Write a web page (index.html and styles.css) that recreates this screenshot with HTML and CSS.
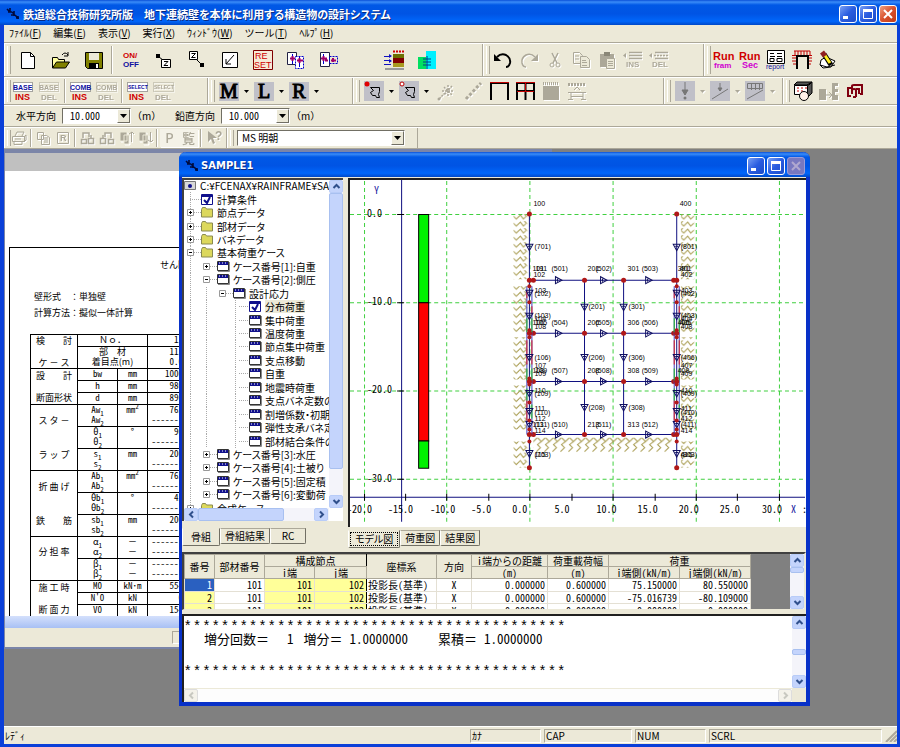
FILE: index.html
```
<!doctype html>
<html lang="ja">
<head>
    <meta charset="utf-8">
    <title>地下連続壁を本体に利用する構造物の設計システム</title>
    <link rel="stylesheet" href="styles.css">
</head>
<body>

<!-- 共通シンボル -->
<svg class="defs" width="0" height="0">
    <defs>
        <symbol id="i-app" viewBox="0 0 14 14"><path d="M1 2l2 2M4 1v4M2 5h4M6 5l2 2M8 4v5M5 8h4M9 8l3 3M10 11h3M12 9v3" stroke="#000a3c" stroke-width="1.6" fill="none"/></symbol>
        <symbol id="i-win" viewBox="0 0 13 11"><path d="M.5.5h11v9H.5z" fill="#fff" stroke="#333"/><path d="M1 1h10v3H1z" fill="#10108c"/><path d="M2 2h1M5 2h1M8 2h1" stroke="#fff"/><path d="M12.500 1v9.500H1" stroke="#888" fill="none"/></symbol>
        <symbol id="i-chk" viewBox="0 0 13 11"><path d="M.5.5h11v10H.5z" fill="#fff" stroke="#10108c"/><path d="M1 1h10v2H1z" fill="#10108c"/><path d="M3 6l3 3 3-6" stroke="#10108c" stroke-width="2" fill="none"/></symbol>
        <symbol id="i-fold" viewBox="0 0 13 11"><path d="M.5 2.500l1-2h3l1 1.500h6v8H.5z" fill="#dcd85c" stroke="#8a8a50"/></symbol>
        <symbol id="i-root" viewBox="0 0 13 11"><path d="M.5 1.500h11v8H.5z" fill="#d8d8d8" stroke="#777"/><circle cx="6" cy="6" r="2" fill="#10108c"/></symbol>
        <symbol id="i-plus" viewBox="0 0 7 7"><path d="M.5.5h6v6h-6z" fill="#fff" stroke="#999"/><path d="M2 3.500h3M3.500 2v3" stroke="#000"/></symbol>
        <symbol id="i-minus" viewBox="0 0 7 7"><path d="M.5.5h6v6h-6z" fill="#fff" stroke="#999"/><path d="M2 3.500h3" stroke="#000"/></symbol>
        <symbol id="i-down" viewBox="0 0 7 4"><path d="M0 0h7L3.500 4z"/></symbol>
        <symbol id="i-ar" viewBox="0 0 9 9"><path d="M1.500 6l3-3 3 3" fill="none" stroke="currentColor" stroke-width="2"/></symbol>
        <symbol id="i-min" viewBox="0 0 12 12"><path d="M1 8h5v3H1z" fill="#fff"/></symbol>
        <symbol id="i-max" viewBox="0 0 12 12"><path d="M1.500 2.500h9v8h-9z" fill="none" stroke="#fff"/><path d="M1 1h10v3H1z" fill="#fff"/></symbol>
        <symbol id="i-close" viewBox="0 0 12 12"><path d="M2 2l8 8M10 2l-8 8" stroke="currentColor" stroke-width="2"/></symbol>
        <symbol id="i-ins" viewBox="0 0 20 20"><path d="M6 2.500h13M6 5.500h13M6 8.500h13" stroke="currentColor" stroke-width="1.500"/><path d="M3 3v5L0 5.500z" fill="currentColor"/></symbol>
        <symbol id="i-del" viewBox="0 0 20 20"><path d="M6 2.500h13M6 8.500h13" stroke="currentColor" stroke-width="1.500"/><path d="M5 5.500h14" stroke="currentColor" stroke-width="1.500" stroke-dasharray="2 1"/><path d="M3 3v5L0 5.500z" fill="currentColor"/></symbol>
        <symbol id="i-hand" viewBox="0 0 20 20"><path d="M0 0h20v20H0z" fill="#c0c0c8"/><path d="M6.500 6.500h9M6.500 6.500l3 3-3 2 2 3h3l1 2h3l-1-3 1-3v-4" fill="none" stroke="#000"/></symbol>
    </defs>
</svg>

<div class="app">
    <header class="title">
        <svg class="ico14"><use href="#i-app"/></svg>
        <h1>鉄道総合技術研究所版　地下連続壁を本体に利用する構造物の設計システム</h1>
        <button class="cap" aria-label="最小化"><svg><use href="#i-min"/></svg></button>
        <button class="cap" aria-label="最大化"><svg><use href="#i-max"/></svg></button>
        <button class="cap red" aria-label="閉じる"><svg><use href="#i-close"/></svg></button>
    </header>

    <nav class="menu">
        <a href="#">ﾌｧｲﾙ(<u>F</u>)</a>
        <a href="#">編集(<u>E</u>)</a>
        <a href="#">表示(<u>V</u>)</a>
        <a href="#">実行(<u>X</u>)</a>
        <a href="#">ｳｨﾝﾄﾞｳ(<u>W</u>)</a>
        <a href="#">ツール(<u>T</u>)</a>
        <a href="#">ﾍﾙﾌﾟ(<u>H</u>)</a>
    </nav>

    <!-- ツールバー1 -->
    <div class="bar bar1">
        <div class="band band-file">
            <button class="tb wide"><svg viewBox="0 0 20 20"><path d="M3.500 2.500h9l4 4v12h-13z" fill="#fff" stroke="#000"/><path d="M12.500 2.500v4h4" fill="none" stroke="#000"/></svg></button>
            <button class="tb wide"><svg viewBox="0 0 20 20"><path d="M1.500 18V7.500h5l1 2h6V12" fill="#ffffa0" stroke="#000"/><path d="M1.500 18l4-6h13l-4 6z" fill="#808000" stroke="#000"/><path d="M11 5q3-4 6 0M17 2v4h-4" fill="none" stroke="#000"/></svg></button>
            <button class="tb wide"><svg viewBox="0 0 20 20"><path d="M1.500 2.500h17v16h-15l-2-2z" fill="#808000" stroke="#000"/><path d="M5 3h10v7H5z" fill="#ece9d8"/><path d="M5 13h10v5H5z" fill="#000"/><path d="M12 14h2v4h-2z" fill="#fff"/></svg></button>
            <i class="sep"></i>
            <button class="tb wide"><svg viewBox="0 0 20 20"><text x="2" y="8" class="t8" fill="#d00000">ON/</text><text x="2" y="17" class="t8" fill="#1010a0">OFF</text></svg></button>
            <button class="tb wide"><svg viewBox="0 0 20 20"><path d="M2 4h4v4H2z"/><path d="M5 7l4 3" stroke="#000"/><path d="M7.500 9.500h9v8h-9z" fill="#fff" stroke="#000"/><path d="M10 11.500h4l-4 4h4" fill="none" stroke="#000"/></svg></button>
            <button class="tb wide"><svg viewBox="0 0 20 20"><path d="M2.500 1.500h8v8h-8z" fill="#fff" stroke="#000"/><path d="M4.500 3.500h4l-4 4h4M10 10l4 4" fill="none" stroke="#000"/><path d="M13 13h4v4h-4z"/></svg></button>
            <button class="tb wide"><svg viewBox="0 0 20 20"><path d="M2.500 2.500h15v15h-15z" fill="#fff" stroke="#000"/><path d="M14 5l-8 9M6 9v5h5" fill="none" stroke="#000"/></svg></button>
            <button class="tb wide"><svg viewBox="0 0 20 20"><path d="M.5.5h19v19H.5z" fill="#f6ead8" stroke="#800000"/><text x="2" y="9" class="t9 n" fill="#d00000">RE</text><text x="1" y="18" class="t9 n" fill="#d00000">SET</text></svg></button>
            <button class="tb wide"><svg viewBox="0 0 20 20"><path d="M1.500 2.500h9v12h-9z" fill="#fff" stroke="#224"/><path d="M9.500 6.500h8v12h-8z" fill="#fff" stroke="#00c" stroke-dasharray="2 1"/><path d="M6.500 4v10M13.500 7v10" stroke="#00c"/><path d="M4 8.500h5M11 10.500h6M6.500 6v5M13.500 8v5" stroke="#a0006a" stroke-width="2" fill="none"/></svg></button>
            <button class="tb wide"><svg viewBox="0 0 20 20"><path d="M1.500 2.500h9v14h-9z" fill="#fff" stroke="#224"/><path d="M10.500 6.500h8v7h-8z" fill="none" stroke="#00c" stroke-dasharray="2 1"/><path d="M4.500 4v10" stroke="#00c"/><path d="M2 8.500h6M6 10.500h3M12 10.500h5M14 8v4M4.500 6v5" stroke="#a0006a" stroke-width="2"/></svg></button>
            <i class="gap"></i>
            <button class="tb wide"><svg viewBox="0 0 20 20"><path d="M0 6.500h7M0 10.500h7M0 14.500h7" stroke="#1010c0"/><path d="M5 4l3 2-3 2M5 9l3 2-3 2" fill="#1010c0"/><path d="M9 1.500h11" stroke="#d00000" stroke-width="2" stroke-dasharray="2 1"/><path d="M9 4h11v4H9z" fill="#6c7000"/><path d="M9 8h11v5H9z" fill="#800000"/><path d="M9 13h11v4H9z" fill="#a89a20"/><path d="M1 18h19v2H1z" fill="#999"/></svg></button>
            <button class="tb wide"><svg viewBox="0 0 20 20"><path d="M1 7h8v12H1z" fill="#00e060"/><path d="M9 1h10v18H9z" fill="#00f0ff"/><path d="M6 9h8M6 12h8M6 15h8M10 6v13" stroke="#004080"/></svg></button>
        </div>
        <div class="band band-edit">
            <button class="tb"><svg viewBox="0 0 20 20"><path d="M4 7q4-4 9-2 5 3 4 8-1 4-4 4" fill="none" stroke="#000" stroke-width="2"/><path d="M1 4v7h7z"/></svg></button>
            <button class="tb off"><svg viewBox="0 0 20 20"><path d="M16 7q-4-4-9-2-5 3-4 8 1 4 4 4" fill="none" stroke="currentColor" stroke-width="1.500"/><path d="M19 4v7h-7z" fill="currentColor"/></svg></button>
            <button class="tb off"><svg viewBox="0 0 20 20"><path d="M7 3l5 10M13 3L8 13" stroke="currentColor" stroke-width="1.500"/><circle cx="7" cy="15" r="2" fill="none" stroke="currentColor"/><circle cx="13" cy="15" r="2" fill="none" stroke="currentColor"/></svg></button>
            <button class="tb off"><svg viewBox="0 0 20 20"><path d="M2.500 2.500h6l3 3v8h-9zM4 6h4M4 9h4" fill="none" stroke="currentColor"/><path d="M9.500 6.500h6l3 3v8h-9z" fill="#ece9d8" stroke="currentColor"/><path d="M11 10.500h4M11 12.500h5M11 15.500h5" stroke="currentColor"/></svg></button>
            <button class="tb off"><svg viewBox="0 0 20 20"><path d="M3 4h14v13H3z" fill="currentColor"/><path d="M7 2h6v4H7z" fill="#8a8778"/><path d="M9.500 8.500h8v10h-8z" fill="#ece9d8" stroke="currentColor"/><path d="M11 11.500h5M11 13.500h5M11 15.500h5" stroke="currentColor"/></svg></button>
            <button class="tb off"><svg viewBox="0 0 20 20"><use href="#i-ins"/><text x="3" y="17" class="t8">INS</text></svg></button>
            <button class="tb off"><svg viewBox="0 0 20 20"><use href="#i-del"/><text x="3" y="17" class="t8">DEL</text></svg></button>
        </div>
        <div class="band last">
            <button class="tb"><svg class="over" viewBox="0 0 20 20"><text x="-1" y="10" class="t11" fill="#d00000">Run</text><text x="0" y="18" class="t8" fill="#d000d0">fram</text></svg></button>
            <button class="tb"><svg class="over" viewBox="0 0 20 20"><text x="-1" y="10" class="t11" fill="#d00000">Run</text><text x="2" y="18" class="t9" fill="#d000d0">Sec</text></svg></button>
            <button class="tb"><svg class="over" viewBox="0 0 20 20"><path d="M1.500.5h17v13h-17z" fill="#fff" stroke="#000"/><path d="M4 3.500h4M11 3.500h5M4 6.500h5M11 6.500h5" stroke="#000"/><path d="M4 8.500h4v3H4zM11 8.500h5v3h-5z" fill="none" stroke="#000"/><text x="0" y="19" class="t7 n" fill="#1010a0">report</text></svg></button>
            <button class="tb"><svg viewBox="0 0 20 20"><path d="M0 5.500h20M3 1v4M6 1v4M9 1v4M12 1v4M15 1v4M18 1v4M2 1h16M0 8h4M0 11h4M1 14h3M16 8h4M16 11h4M16 14h3" stroke="#c00000"/><path d="M5 19V6h11v13" fill="none" stroke="#000" stroke-width="2"/></svg></button>
            <button class="tb"><svg viewBox="0 0 20 20"><path d="M3 10l5-3 9 4-4 6-8 1-3-3z" fill="#fff" stroke="#000"/><path d="M2 15l7 2 8-2" fill="none" stroke="#000"/><path d="M6 4l7 11" stroke="#000" stroke-width="5"/><path d="M6 4l6 9" stroke="#ffee20" stroke-width="3"/><path d="M4 2l3 4" stroke="#902020" stroke-width="5"/></svg></button>
        </div>
    </div>

    <!-- ツールバー2 -->
    <div class="bar bar2">
        <div class="band band-case">
            <button class="tb"><svg class="over" viewBox="0 0 20 20"><path d="M.5 1.500h19v9H.5z" fill="#fff" stroke="#555" stroke-dasharray="1 1"/><text x="0" y="9" class="t7" fill="#1010a0">BASE</text><text x="2" y="19" class="t9" fill="#d00000">INS</text></svg></button>
            <button class="tb off"><svg class="over" viewBox="0 0 20 20"><path d="M.5 1.500h19v9H.5z" fill="none" stroke="currentColor" stroke-dasharray="1 1"/><text x="0" y="9" class="t7">BASE</text><text x="2" y="19" class="t8">DEL</text></svg></button>
            <i class="sep"></i>
            <button class="tb"><svg class="over" viewBox="0 0 20 20"><path d="M.5 1.500h20v9H.5z" fill="#fff" stroke="#555" stroke-dasharray="1 1"/><text x="0" y="9" class="t7" fill="#1010a0">COMB</text><text x="2" y="19" class="t9" fill="#d00000">INS</text></svg></button>
            <button class="tb off"><svg class="over" viewBox="0 0 20 20"><path d="M.5 1.500h20v9H.5z" fill="none" stroke="currentColor" stroke-dasharray="1 1"/><text x="0" y="9" class="t7">COMB</text><text x="2" y="19" class="t8">DEL</text></svg></button>
            <i class="sep"></i>
            <button class="tb"><svg class="over" viewBox="0 0 20 20"><path d="M.5 1.500h20v9H.5z" fill="#fff" stroke="#555" stroke-dasharray="1 1"/><text x="1" y="8" class="t6" fill="#1010a0">SELECT</text><text x="2" y="19" class="t9" fill="#d00000">INS</text></svg></button>
            <button class="tb off"><svg class="over" viewBox="0 0 20 20"><path d="M.5 1.500h20v9H.5z" fill="none" stroke="currentColor" stroke-dasharray="1 1"/><text x="1" y="8" class="t6">SELECT</text><text x="2" y="19" class="t8">DEL</text></svg></button>
        </div>
        <div class="band band-mlr">
            <button class="tb serif">M</button><button class="dd"><svg><use href="#i-down"/></svg></button>
            <button class="tb serif">L</button><button class="dd"><svg><use href="#i-down"/></svg></button>
            <button class="tb serif">R</button><button class="dd"><svg><use href="#i-down"/></svg></button>
        </div>
        <div class="band band-sel">
            <button class="tb s20"><svg viewBox="0 0 20 20"><use href="#i-hand"/><circle cx="3" cy="3" r="2.500" fill="#e00000"/></svg></button><button class="dd"><svg><use href="#i-down"/></svg></button>
            <button class="tb s20"><svg viewBox="0 0 20 20"><use href="#i-hand"/><circle cx="3" cy="3" r="2" fill="#fff" stroke="#c00000"/></svg></button><button class="dd"><svg><use href="#i-down"/></svg></button>
            <button class="tb off"><svg viewBox="0 0 20 20"><path d="M11 4v12M5 10h12M7 6l8 8M15 5l-8 9M8 12l-6 6" stroke="currentColor" stroke-width="1.500" stroke-dasharray="2 1"/><circle cx="2" cy="18" r="1.500" fill="currentColor"/></svg></button>
            <button class="tb off"><svg viewBox="0 0 20 20"><path d="M3 18L18 2" stroke="currentColor" stroke-width="3" stroke-dasharray="3 2"/></svg></button>
            <button class="tb"><svg viewBox="0 0 20 20"><path d="M2 19V2h17v17" fill="none" stroke="#000" stroke-width="2"/><path d="M1 1.500h19" stroke="#c00000"/></svg></button>
            <button class="tb"><svg viewBox="0 0 20 20"><path d="M2 19V2h17v17M10.500 2v17M2 10h17" fill="none" stroke="#000" stroke-width="2"/><path d="M1 1.500h19M2 10.500h17M10.500 1v10" stroke="#c00000"/></svg></button>
            <button class="tb off"><svg viewBox="0 0 20 20"><path d="M2 5h16v14H2z" fill="currentColor"/><path d="M2 2.500h16" stroke="currentColor" stroke-width="3" stroke-dasharray="1 1"/></svg></button>
            <button class="tb off"><svg viewBox="0 0 20 20"><path d="M1 3.500h18" stroke="currentColor" stroke-width="3" stroke-dasharray="2 1"/><path d="M7 9l3-3 3 3M1 11.500h18M4 11v8M16 11v8M4 15.500h12M1 18.500h5M14 18.500h5" fill="none" stroke="currentColor"/></svg></button>
        </div>
        <div class="band band-load">
            <button class="tb s20 off box"><svg viewBox="0 0 20 20"><path d="M10 1v13M7 9l3 5 3-5z" fill="#777" stroke="#777"/><circle cx="10" cy="17" r="1.500" fill="#777"/></svg></button><button class="dd off"><svg><use href="#i-down"/></svg></button>
            <button class="tb s20 off box"><svg viewBox="0 0 20 20"><path d="M10 2v8M8 7l2 3 2-3zM2 18L18 8" fill="#777" stroke="#777"/></svg></button><button class="dd off"><svg><use href="#i-down"/></svg></button>
            <button class="tb s20 off box"><svg viewBox="0 0 20 20"><path d="M2.500 2.500h15v5h-15zM6.500 2v7M10.500 2v7M14.500 2v7M2 18L18 9" fill="none" stroke="#777"/></svg></button><button class="dd off"><svg><use href="#i-down"/></svg></button>
        </div>
        <div class="band last">
            <button class="tb"><svg viewBox="0 0 20 20"><path d="M1 4l3-3h15l-3 3zM14 4l5-3v11l-5 5z" fill="#555" stroke="#000"/><path d="M1.500 4.500h13v9h-13z" fill="#fff" stroke="#000"/><path d="M4 7h2M8 7h2M12 7h2M4 10h2M8 10h2" stroke="#c00000"/><circle cx="11" cy="15" r="4.500" fill="#fff0e8" stroke="#000"/></svg></button>
            <button class="tb off"><svg viewBox="0 0 20 20"><path d="M0 8h7v11H0zM13 2h6v3h-3v3h3v3h-3v3h3v5h-6z" fill="currentColor"/><path d="M7 14h6M10 11l3 3-3 3" stroke="currentColor" fill="none"/></svg></button>
            <button class="tb"><svg viewBox="0 0 20 20"><path d="M6 15H3V7h4M7 13V5q0-1 2-1h8v9h-2M11 16V9q0-1-2-1-2 0-2 1M11 16H8M14 13V8h-3" fill="none" stroke="#800010" stroke-width="2"/></svg></button>
        </div>
    </div>

    <!-- 寸法入力 -->
    <div class="bar bar3">
        <label for="hx">水平方向</label>
        <div class="combo num"><select id="hx"><option>10.000</option></select><span class="combo-btn"><svg><use href="#i-down"/></svg></span></div>
        <span class="unit">（m）</span>
        <label for="vy">鉛直方向</label>
        <div class="combo num"><select id="vy"><option>10.000</option></select><span class="combo-btn"><svg><use href="#i-down"/></svg></span></div>
        <span class="unit">（m）</span>
    </div>

    <div class="bar bar4">
        <div class="band band-print">
            <button class="tb s off"><svg viewBox="0 0 16 16"><path d="M4 6l2-4h7l-2 4M1.500 6.500h12v5h-12zM3 11.500h8v3H3zM13 7l2-2v5l-2 2M4 9h6" fill="none" stroke="currentColor"/></svg></button>
            <i class="sep"></i>
            <button class="tb s off"><svg viewBox="0 0 16 16"><path d="M1.500 2.500h6v7h-6zM5.500 5.500h5l3 2v7h-8zM8 8h4M8 10h4M8 12h4" fill="none" stroke="currentColor"/></svg></button>
            <button class="tb s off"><svg viewBox="0 0 16 16"><path d="M2.500 2.500h11v11h-11z" fill="none" stroke="currentColor"/><text x="5" y="11" class="t9">R</text></svg></button>
            <i class="sep"></i>
            <button class="tb s off"><svg viewBox="0 0 16 16"><path d="M3 8V3h6v4M1.500 9.500h5v4h-5zM8.500 8.500h5v5h-5zM11 8V5" fill="none" stroke="currentColor" stroke-width="1.500"/></svg></button>
            <button class="tb s off"><svg viewBox="0 0 16 16"><path d="M12 8V3H6v4M9.500 9.500h5v4h-5zM1.500 8.500h5v5h-5zM4 8V5" fill="none" stroke="currentColor" stroke-width="1.500"/></svg></button>
            <button class="tb s off"><svg viewBox="0 0 16 16"><path d="M2 2h7v9H2zM6 5h5v9H6z" fill="currentColor" stroke="#ece9d8"/><path d="M13.500 2v10M11 4l3-2 2 2" fill="none" stroke="currentColor"/></svg></button>
            <button class="tb s off"><svg viewBox="0 0 16 16"><path d="M2 2h7v9H2zM6 5h5v9H6z" fill="currentColor" stroke="#ece9d8"/><path d="M13.500 2v10M11 10l3 2 2-2" fill="none" stroke="currentColor"/></svg></button>
            <i class="sep"></i>
            <button class="tb s off glyph lit">P</button>
            <button class="tb s off glyph lit">覧</button>
            <i class="sep"></i>
            <button class="tb s off"><svg viewBox="0 0 16 16"><path d="M2 1v11l3-3 2 5 2-1-2-5h4z" fill="currentColor"/><text x="9" y="10" class="t12">?</text></svg></button>
        </div>
        <div class="band band-font">
            <div class="combo font"><select aria-label="フォント"><option>MS 明朝</option></select><span class="combo-btn"><svg><use href="#i-down"/></svg></span></div>
        </div>
    </div>

    <main class="mdi">

        <!-- 帳票ウィンドウ -->
        <section class="report">
            <div class="report-cap"></div>
            <div class="paper">
                <div class="sheet">
                    <p class="head">せん断</p>
                    <p class="info">壁形式　：単独壁</p>
                    <p class="info">計算方法：擬似一体計算</p>
                    <table class="calc">
                        <colgroup><col class="c47"><col class="c40"><col class="c30"><col class="c36"></colgroup>
                        <tr class="s"><th rowspan="2"><div>検　　討</div><div>ケ － ス</div></th><td colspan="2" class="fw">Ｎｏ．</td><td class="v">11</td></tr>
                        <tr class="d"><td colspan="2" class="fw">部　材<br>着目点(m)</td><td class="v">111 <br>0.0</td></tr>
                        <tr class="s"><th rowspan="3"><div>設　　計</div><div>断面形状</div></th><td>bw</td><td>mm</td><td class="v">1000</td></tr>
                        <tr class="s"><td>h</td><td>mm</td><td class="v">980</td></tr>
                        <tr class="s"><td>d</td><td>mm</td><td class="v">890</td></tr>
                        <tr class="d"><th rowspan="3" class="tall"><div>ス タ －</div><div>ラ ッ プ</div></th><td>Aw<sub>1</sub><br>Aw<sub>2</sub></td><td>mm<sup>2</sup></td><td class="v">765<br>-------</td></tr>
                        <tr class="d"><td>θ<sub>1</sub><br>θ<sub>2</sub></td><td>°</td><td class="v">90<br>-------</td></tr>
                        <tr class="d"><td>s<sub>1</sub><br>s<sub>2</sub></td><td>mm</td><td class="v">200<br>-------</td></tr>
                        <tr class="d"><th rowspan="3" class="tall"><div>折 曲 げ</div><div>鉄　　筋</div></th><td>Ab<sub>1</sub><br>Ab<sub>2</sub></td><td>mm<sup>2</sup></td><td class="v">765<br>-------</td></tr>
                        <tr class="d"><td>θb<sub>1</sub><br>θb<sub>2</sub></td><td>°</td><td class="v">45<br>-------</td></tr>
                        <tr class="d"><td>sb<sub>1</sub><br>sb<sub>2</sub></td><td>mm</td><td class="v">200<br>-------</td></tr>
                        <tr class="d"><th rowspan="2" class="up"><div>分 担 率</div></th><td>α<sub>1</sub><br>α<sub>2</sub></td><td class="fw">－<br>－</td><td class="v">-------<br>-------</td></tr>
                        <tr class="d"><td>β<sub>1</sub><br>β<sub>2</sub></td><td class="fw">－<br>－</td><td class="v">-------<br>-------</td></tr>
                        <tr class="s"><th rowspan="3"><div>施 工 時</div><div>断 面 力</div></th><td>M0</td><td>kN･m</td><td class="v">554</td></tr>
                        <tr class="s"><td>N'0</td><td>kN</td><td class="v">0</td></tr>
                        <tr class="s"><td>V0</td><td>kN</td><td class="v">154</td></tr>
                    </table>
                </div>
            </div>
            <div class="report-scroll"></div>
            <div class="report-status"><span></span></div>
        </section>

        <!-- モデルウィンドウ -->
        <section class="child">
            <header class="title sub">
                <svg class="ico14"><use href="#i-app"/></svg>
                <h2>SAMPLE1</h2>
                <button class="cap" aria-label="最小化"><svg><use href="#i-min"/></svg></button>
                <button class="cap" aria-label="最大化"><svg><use href="#i-max"/></svg></button>
                <button class="cap dim" aria-label="閉じる" disabled><svg><use href="#i-close"/></svg></button>
            </header>
            <div class="work">
                <div class="top">
                    <div class="left">
                        <div class="treebox">
                            <ul class="tree">
                                <li class="l0"><svg><use href="#i-root"/></svg>C:¥FCENAX¥RAINFRAME¥SA</li>
                                <li class="l1"><b></b><svg><use href="#i-chk"/></svg>計算条件</li>
                                <li class="l1"><b><svg><use href="#i-plus"/></svg></b><svg><use href="#i-fold"/></svg>節点データ</li>
                                <li class="l1"><b><svg><use href="#i-plus"/></svg></b><svg><use href="#i-fold"/></svg>部材データ</li>
                                <li class="l1"><b><svg><use href="#i-plus"/></svg></b><svg><use href="#i-fold"/></svg>バネデータ</li>
                                <li class="l1"><b><svg><use href="#i-minus"/></svg></b><svg><use href="#i-fold"/></svg>基本荷重ケース</li>
                                <li class="l2"><b><svg><use href="#i-plus"/></svg></b><svg><use href="#i-win"/></svg>ケース番号[1]:自重</li>
                                <li class="l2"><b><svg><use href="#i-minus"/></svg></b><svg><use href="#i-win"/></svg>ケース番号[2]:側圧</li>
                                <li class="l3"><b><svg><use href="#i-minus"/></svg></b><svg><use href="#i-win"/></svg>設計応力</li>
                                <li class="l4"><b></b><svg><use href="#i-chk"/></svg><span class="on">分布荷重</span></li>
                                <li class="l4"><b></b><svg><use href="#i-win"/></svg>集中荷重</li>
                                <li class="l4"><b></b><svg><use href="#i-win"/></svg>温度荷重</li>
                                <li class="l4"><b></b><svg><use href="#i-win"/></svg>節点集中荷重</li>
                                <li class="l4"><b></b><svg><use href="#i-win"/></svg>支点移動</li>
                                <li class="l4"><b></b><svg><use href="#i-win"/></svg>自重</li>
                                <li class="l4"><b></b><svg><use href="#i-win"/></svg>地震時荷重</li>
                                <li class="l4"><b></b><svg><use href="#i-win"/></svg>支点バネ定数の</li>
                                <li class="l4"><b></b><svg><use href="#i-win"/></svg>割増係数・初期</li>
                                <li class="l4"><b></b><svg><use href="#i-win"/></svg>弾性支承バネ定</li>
                                <li class="l4"><b></b><svg><use href="#i-win"/></svg>部材結合条件の</li>
                                <li class="l2"><b><svg><use href="#i-plus"/></svg></b><svg><use href="#i-win"/></svg>ケース番号[3]:水圧</li>
                                <li class="l2"><b><svg><use href="#i-plus"/></svg></b><svg><use href="#i-win"/></svg>ケース番号[4]:土被り</li>
                                <li class="l2"><b><svg><use href="#i-plus"/></svg></b><svg><use href="#i-win"/></svg>ケース番号[5]:固定積</li>
                                <li class="l2"><b><svg><use href="#i-plus"/></svg></b><svg><use href="#i-win"/></svg>ケース番号[6]:変動荷</li>
                                <li class="l1"><b><svg><use href="#i-plus"/></svg></b><svg><use href="#i-fold"/></svg>合成ケース</li>
                            </ul>
                            <div class="vs"><button class="up"><svg><use href="#i-ar"/></svg></button><i class="thumb long"></i><button class="dn"><svg><use href="#i-ar"/></svg></button></div>
                            <div class="hs"><button class="lf"><svg><use href="#i-ar"/></svg></button><i class="thumb"></i><button class="rt"><svg><use href="#i-ar"/></svg></button></div>
                        </div>
                        <div class="tabs tree-tabs">
                            <button class="tab cur">骨組</button><button class="tab">骨組結果</button><button class="tab">RC</button>
                        </div>
                    </div>
                    <div class="right">
                        <div class="canvas">
                            <svg viewBox="350 180 455 348" preserveAspectRatio="xMinYMin slice">
                                <defs>
                                    <pattern id="sp" x="513" y="214" width="14" height="7" patternUnits="userSpaceOnUse"><path d="M0 2l3 3 4-4 3 4 3-3-2-2" fill="none" stroke="#a89c50"/></pattern>
                                    <pattern id="spr" x="680" y="214" width="14" height="7" patternUnits="userSpaceOnUse"><path d="M2 0L0 2l3 3 4-4 3 4 3-3" fill="none" stroke="#a89c50"/></pattern>
                                    <pattern id="spb" x="533" y="437" width="8" height="16" patternUnits="userSpaceOnUse"><path d="M0 4l4-4 4 4-4 3 3 3-4 4" fill="none" stroke="#a89c50"/></pattern>
                                    <path id="td" d="M-3.500-3h7L0 3.500zM-1.500-1h3" fill="none" stroke="#101060"/>
                                    <path id="tr" d="M-3-3.500v7L3.500 0zM-1-1.500v3" fill="none" stroke="#101060"/>
                                    <g id="nodes">
                                        <circle cy="214" r="2.500"/><circle cy="280" r="2.500"/><circle cy="286" r="2"/><circle cy="302" r="2"/><circle cy="330" r="2"/><circle cy="333" r="2.500"/><circle cy="337" r="2"/>
                                        <circle cy="378" r="2"/><circle cy="381" r="2.500"/><circle cy="384" r="2"/><circle cy="402" r="2"/><circle cy="420" r="2"/><circle cy="429" r="2"/><circle cy="434" r="2.500"/><circle cy="441" r="2"/><circle cy="467" r="2.500"/>
                                    </g>
                                    <g id="wall">
                                        <path d="M-2.500 286V434M2.500 286V434" stroke="#4040c0"/>
                                        <path d="M-2.500 290v8M2.500 306v8M-2.500 340v24M2.500 340v24M-2.500 400v20" stroke="#e02020"/>
                                        <path d="M-2.500 318v14M2.500 318v14M-2.500 368v12M2.500 368v12M-2.500 388v12M2.500 404v14" stroke="#20c020"/>
                                        <path d="M0 214V467" stroke="#101080"/>
                                        <use href="#td" y="247"/><use href="#td" y="293"/><use href="#td" y="316"/><use href="#td" y="357"/><use href="#td" y="393"/><use href="#td" y="411"/><use href="#td" y="424"/><use href="#td" y="453"/>
                                    </g>
                                    <g id="beam">
                                        <path d="M529 0H676" stroke="#101080"/>
                                        <use href="#tr" x="558"/><use href="#tr" x="603"/><use href="#tr" x="648"/>
                                        <g fill="#b01818"><circle cx="533" r="2.500"/><circle cx="584" r="2.500"/><circle cx="623" r="2.500"/><circle cx="673" r="2.500"/></g>
                                    </g>
                                </defs>
                                <path d="M350 214.500h453M350 302.500h453M350 390.500h453M350 478.500h453M364.500 181v340M446.500 181v340M529.500 181v340M612.500 181v340M695.500 181v340M778.500 181v340" stroke="#40d040" stroke-dasharray="4 3" fill="none"/>
                                <path d="M401.500 180v341M350 496.500h454" stroke="#101080"/>
                                <path d="M397 214.500h7M397 302.500h7M397 390.500h7M397 478.500h7M364.500 493v7M405.500 493v7M446.500 493v7M488.500 493v7M529.500 493v7M571.500 493v7M612.500 493v7M654.500 493v7M695.500 493v7M736.500 493v7M778.500 493v7" stroke="#000"/>
                                <g stroke="#000"><path d="M418.500 214.500h10v88h-10z" fill="#00f000"/><path d="M418.500 302.500h10v138h-10z" fill="#f00"/><path d="M418.500 440.500h10v27h-10z" fill="#00f000"/></g>
                                <path d="M513 214h14v65h-14zM513 286h14v46h-14zM513 337h14v42h-14zM513 385h14v44h-14zM513 441h14v26h-14z" fill="url(#sp)"/>
                                <path d="M680 214h14v65h-14zM680 286h14v46h-14zM680 337h14v42h-14zM680 385h14v44h-14zM680 441h14v26h-14z" fill="url(#spr)"/>
                                <path d="M533 437h138v15H533z" fill="url(#spb)"/>
                                <path d="M584 280v154M623 280v154" stroke="#101080"/>
                                <use href="#beam" y="280"/><use href="#beam" y="333"/><use href="#beam" y="381"/><use href="#beam" y="434"/>
                                <use href="#td" x="584" y="307"/><use href="#td" x="584" y="357"/><use href="#td" x="584" y="407"/>
                                <use href="#td" x="623" y="307"/><use href="#td" x="623" y="357"/><use href="#td" x="623" y="407"/>
                                <use href="#wall" x="529"/><use href="#wall" x="676"/>
                                <use href="#nodes" x="529" fill="#b01818"/><use href="#nodes" x="676" fill="#b01818"/>
                                <g class="lbl">
                                    <text x="533" y="206">100</text><text x="679" y="206">400</text>
                                    <text x="534" y="249">(701)</text><text x="680" y="249">(801)</text>
                                    <text x="532" y="271">101</text><text x="535" y="271">191</text><text x="533" y="277">102</text><text x="551" y="271">(501)</text><text x="587" y="271">201</text><text x="595" y="271">(502)</text><text x="627" y="271">301</text><text x="641" y="271">(503)</text><text x="677" y="271">391</text><text x="679" y="271">401</text><text x="680" y="277">402</text>
                                    <text x="534" y="293">103</text><text x="534" y="296">(102)</text><text x="680" y="293">403</text><text x="680" y="296">(402)</text>
                                    <text x="588" y="309">(201)</text><text x="628" y="309">(301)</text>
                                    <text x="534" y="318">(103)</text><text x="680" y="318">(403)</text><text x="534" y="321">104</text><text x="680" y="321">404</text>
                                    <text x="532" y="325">106</text><text x="535" y="325">105</text><text x="534" y="329">108</text><text x="551" y="325">(504)</text><text x="587" y="325">206</text><text x="595" y="325">(505)</text><text x="627" y="325">306</text><text x="641" y="325">(506)</text><text x="677" y="325">406</text><text x="679" y="325">405</text><text x="680" y="329">408</text>
                                    <text x="534" y="360">(106)</text><text x="588" y="360">(206)</text><text x="628" y="360">(306)</text><text x="680" y="360">(406)</text>
                                    <text x="534" y="368">107</text><text x="532" y="373">108</text><text x="535" y="373">109</text><text x="534" y="376">109</text><text x="551" y="373">(507)</text><text x="587" y="373">208</text><text x="595" y="373">(508)</text><text x="627" y="373">308</text><text x="641" y="373">(509)</text><text x="680" y="368">407</text><text x="677" y="373">408</text><text x="680" y="376">409</text>
                                    <text x="534" y="393">110</text><text x="534" y="396">(109)</text><text x="680" y="393">410</text><text x="680" y="396">(409)</text>
                                    <text x="534" y="411">111</text><text x="534" y="414">(110)</text><text x="588" y="410">(208)</text><text x="628" y="410">(308)</text><text x="680" y="411">411</text><text x="680" y="414">(410)</text>
                                    <text x="534" y="420">112</text><text x="532" y="426">113</text><text x="534" y="426">(111)</text><text x="534" y="432">114</text><text x="551" y="426">(510)</text><text x="587" y="426">213</text><text x="595" y="426">(511)</text><text x="627" y="426">313</text><text x="641" y="426">(512)</text><text x="680" y="420">412</text><text x="680" y="426">(411)</text><text x="680" y="432">414</text>
                                    <text x="534" y="456">115</text><text x="534" y="456">(703)</text><text x="680" y="456">415</text><text x="680" y="456">(803)</text>
                                </g>
                                <g class="axis">
                                    <text x="367" y="217">0.0</text><text x="367" y="305">-10.0</text><text x="367" y="393">-20.0</text><text x="367" y="481">-30.0</text>
                                    <text x="347" y="512">-20.0</text><text x="388" y="512">-15.0</text><text x="430" y="512">-10.0</text><text x="471" y="512">-5.0</text><text x="512" y="512">0.0</text><text x="554" y="512">5.0</text><text x="596" y="512">10.0</text><text x="637" y="512">15.0</text><text x="678" y="512">20.0</text><text x="719" y="512">25.0</text><text x="761" y="512">30.0</text>
                                    <text x="374" y="194" fill="#2020a0">Y</text><text x="790" y="512" fill="#2020a0">X</text><text x="801" y="512">:</text>
                                </g>
                            </svg>
                        </div>
                        <div class="tabs">
                            <button class="tab cur dot">モデル図</button><button class="tab">荷重図</button><button class="tab">結果図</button>
                        </div>
                    </div>
                </div>

                <div class="gridbox">
                    <table class="grid">
                        <colgroup><col class="c30"><col class="c50"><col class="c50"><col class="c52"><col class="c70"><col class="c35"><col class="c76"><col class="c61"><col class="c71"><col class="c71"></colgroup>
                        <thead>
                            <tr><th rowspan="2">番号</th><th rowspan="2">部材番号</th><th colspan="2" class="bar-r">構成節点</th><th rowspan="2">座標系</th><th rowspan="2">方向</th><th>i端からの距離</th><th>荷重載荷幅</th><th colspan="2">荷重</th></tr>
                            <tr><th>i端</th><th class="bar-r">j端</th><th>(m)</th><th>(m)</th><th>i端側(kN/m)</th><th>j端側(kN/m)</th></tr>
                        </thead>
                        <tbody>
                            <tr><td class="sel">1</td><td>101</td><td class="y">101</td><td class="y bar-r">102</td><td class="l">投影長(基準)</td><td class="c">X</td><td>0.000000</td><td>0.600000</td><td>75.150000</td><td>80.550000</td></tr>
                            <tr><td class="y">2</td><td>101</td><td class="y">101</td><td class="y bar-r">102</td><td class="l">投影長(基準)</td><td class="c">X</td><td>0.000000</td><td>0.600000</td><td>-75.016739</td><td>-80.109000</td></tr>
                            <tr><td class="y">3</td><td>101</td><td class="y">101</td><td class="y bar-r">102</td><td class="l">投影長(基準)</td><td class="c">X</td><td>0.000000</td><td>0.000000</td><td>0.000000</td><td>0.000000</td></tr>
                        </tbody>
                    </table>
                    <div class="vs"><button class="up"><svg><use href="#i-ar"/></svg></button><i class="thumb tiny"></i><button class="dn"><svg><use href="#i-ar"/></svg></button></div>
                </div>

                <div class="logbox">
                    <div class="log">
                        <p class="star">* * * * * * * * * * * * * * * * * * * * * * * * * * * * * * * * * * * * * * * * *</p>
                        <p class="msg"><span>増分回数＝</span><span class="hw">1</span><span>増分＝</span><span class="hw">1.0000000</span><span>累積＝</span><span class="hw">1.0000000</span></p>
                        <p class="msg"></p>
                        <p class="star">* * * * * * * * * * * * * * * * * * * * * * * * * * * * * * * * * * * * * * * * *</p>
                    </div>
                    <div class="vs"><button class="up"><svg><use href="#i-ar"/></svg></button><i class="thumb tiny mid"></i><button class="dn"><svg><use href="#i-ar"/></svg></button></div>
                    <div class="hs none"><button class="lf"><svg><use href="#i-ar"/></svg></button><i></i><button class="rt"><svg><use href="#i-ar"/></svg></button></div>
                </div>
            </div>
        </section>
    </main>

    <footer class="status">
        <span class="msg0">ﾚﾃﾞｨ</span>
        <span class="p p70">ｶﾅ</span>
        <span class="p p88">CAP</span>
        <span class="p p70">NUM</span>
        <span class="p p172">SCRL</span>
        <svg class="size" viewBox="0 0 12 12"><path d="M1 12L12 1M5 12l7-7M9 12l3-3" stroke="#aca899" stroke-width="2"/></svg>
    </footer>
</div>
</body>
</html>
```
FILE: styles.css
```
* { box-sizing: border-box; }
html, body { height: 100%; }
body { margin: 0; font: 10px/12px "Noto Sans CJK JP", sans-serif; color: #000; background: #ece9d8; overflow: hidden; }
h1, h2, p, ul { margin: 0; padding: 0; }
button { margin: 0; padding: 0; border: 0; background: none; font: inherit; color: inherit; }
svg { display: block; flex: none; }
.defs { position: absolute; }

.app { display: flex; flex-direction: column; height: 100vh; border: solid #0a3fd8; border-width: 0 3px 3px 4px; background: #ece9d8; }

/* タイトルバー */
.title { display: flex; align-items: center; gap: 2px; flex: none; height: 25px; margin: 0 -3px 0 -4px; padding: 3px 3px 0 6px; color: #fff;
    background: linear-gradient(#0a50d8 0, #3a8cf8 8%, #0058e6 20%, #0054e4 55%, #0066fa 85%, #0048c8); }
.title h1, .title h2 { flex: 1; margin-left: 1px; font-size: 11px; line-height: 16px; font-weight: 700; text-shadow: 1px 1px 0 #0a2a80; white-space: nowrap; }
.title h1 { font-feature-settings: "palt"; }
.ico14 { width: 14px; height: 14px; }
.cap { display: flex; align-items: center; justify-content: center; width: 18px; height: 18px; border: 1px solid #fff; border-radius: 3px; background: linear-gradient(135deg, #7aa0f4, #2a5ce0 50%, #1c4cc8); color: #fff; }
.cap svg { width: 12px; height: 12px; }
.cap.red { background: linear-gradient(135deg, #f0a080, #d8502c 50%, #c03c18); }
.cap.dim { background: #7878c0; border-color: #9c9cd8; color: #b0a8d0; }

.menu { display: flex; gap: 12px; flex: none; height: 18px; padding: 1px 5px; border-bottom: 1px solid #aca899; line-height: 14px; }
.menu a { color: #000; text-decoration: none; white-space: nowrap; }

/* ツールバー */
.bar { display: flex; flex: none; border-top: 1px solid #fff; border-bottom: 1px solid #aca899; }
.bar1 { height: 34px; }
.bar2 { height: 28px; }
.bar3 { height: 22px; align-items: center; padding-left: 12px; }
.bar4 { height: 22px; }
.band { display: flex; flex: none; align-items: center; padding-left: 7px; border-right: 1px solid #aca899; background: linear-gradient(#fff, #fff) 0 0 / 1px 100% no-repeat; position: relative; }
.band::before { content: ""; position: absolute; left: 3px; top: 2px; bottom: 2px; width: 2px; border-left: 1px solid #fff; border-right: 1px solid #aca899; }
.band.last { flex: 1; border-right: 0; }
.band-file { width: 479px; }
.band-edit { width: 221px; }
.band-case { width: 204px; padding-left: 6px; }
.band-mlr { width: 145px; padding-left: 11px; }
.band-sel { width: 311px; padding-left: 11px; }
.band-load { width: 119px; padding-left: 11px; }
.band-print { width: 223px; padding-left: 5px; }
.band-font { width: 191px; padding-left: 10px; }
.tb { display: flex; align-items: center; justify-content: center; flex: none; width: 26px; height: 22px; }
.tb svg { width: 20px; height: 20px; }
.tb svg.over { overflow: visible; }
.tb.wide { width: 33px; }
.tb.s20 { width: 20px; }
.tb.s { width: 19px; height: 18px; }
.tb.s svg { width: 16px; height: 16px; }
.tb.s.lit { background: #f4f2e8; }
.off { color: #aca899; fill: #aca899; }
.off svg, .glyph { filter: drop-shadow(1px 1px 0 #fff); }
.tb.box svg { filter: none; }
.tb.glyph { font-size: 13px; font-weight: 500; }
.tb.serif { width: 20px; height: 19px; background: #c0c0c8; font: 20px/19px "Liberation Serif", serif; color: #000; -webkit-text-stroke: 1px #000; }
.tb.box { height: 20px; background: #c0c0c8; }
.dd { display: flex; align-items: center; justify-content: center; width: 15px; height: 20px; }
.dd svg { width: 5px; height: 3px; }
.sep { flex: none; width: 2px; height: 90%; margin: 0 1px; border-left: 1px solid #aca899; border-right: 1px solid #fff; }
.bar2 .sep { margin: 0 1px 0 2px; }
.bar4 .sep { margin: 0 2px; }
.gap { width: 32px; }
.t6, .t7, .t8, .t9, .t11, .t12 { font-family: "Liberation Sans", sans-serif; font-weight: 700; }
.t6 { font-size: 5px; }
.t7 { font-size: 7px; }
.t8 { font-size: 8px; }
.t9 { font-size: 9px; }
.t11 { font-size: 11px; }
.t12 { font-size: 12px; }
.n { font-weight: 400; }

.bar3 label { width: 45px; margin-right: 1px; white-space: nowrap; }
.bar3 .unit { width: 37px; padding-left: 1px; white-space: nowrap; }
.bar3 .unit + label { margin-left: 7px; }
.combo { display: flex; height: 16px; border: 1px solid; border-color: #716f64 #fff #fff #716f64; background: #fff; }
.combo select { flex: 1; min-width: 0; padding: 0 0 0 4px; border: 0; outline: 0; appearance: none; background: none; font: 10px/14px "Noto Sans CJK JP", sans-serif; color: #000; }
.combo.num { width: 69px; }
.combo.num select { padding-left: 7px; font-feature-settings: "hwid"; }
.combo.font { width: 168px; }
.combo-btn { display: flex; align-items: center; justify-content: center; width: 13px; border: 1px solid; border-color: #fff #716f64 #716f64 #fff; background: #ece9d8; }
.combo-btn svg { width: 7px; height: 4px; }

/* MDI領域 */
.mdi { position: relative; flex: 1; min-height: 0; overflow: hidden; background: #808080; }

/* 帳票 */
.report { position: absolute; left: 0; top: 0; width: 548px; height: 500px; display: flex; flex-direction: column; border: solid #7b85a8; border-width: 4px 1px 2px 1px; background: #ece9d8; }
.report-cap { height: 18px; background: #c0c0c0; }
.paper { flex: 1; min-height: 0; padding: 76px 0 0 4px; background: #fff; overflow: hidden; }
.sheet { height: 380px; padding: 11px 0 0 20px; border: solid #000; border-width: 1px 0 0 1px; font-size: 9px; }
.sheet .head { height: 32px; padding-left: 130px; }
.sheet .info { height: 16px; padding-left: 4px; }
.calc { margin-top: 11px; width: 153px; table-layout: fixed; border-collapse: collapse; line-height: 10px; text-align: center; }
.calc th, .calc td { padding: 0; border: 1px solid #000; font-weight: 400; vertical-align: top; white-space: nowrap; }
.calc td { font-feature-settings: "hwid"; }
.calc td.fw { font-feature-settings: normal; }
.calc th { vertical-align: middle; }
.calc th div + div { margin-top: 12px; }
.calc th.tall div + div { margin-top: 24px; }
.calc th.up { padding-bottom: 14px; }
.calc .v { text-align: right; }
.calc .s { height: 12px; }
.calc .d { height: 22px; }
.calc sub, .calc sup { font-size: 7px; line-height: 0; }
.report-scroll { height: 12px; background: linear-gradient(#d4e0fc, #a8c0f4); }
.report-status { height: 19px; padding: 3px 0 3px 167px; }
.report-status span { display: block; height: 13px; border: 1px solid; border-color: #aca899 #fff #fff #aca899; }

/* モデル */
.child { position: absolute; left: 175px; top: 3px; width: 631px; height: 554px; display: flex; flex-direction: column; border: solid #0831c8; border-width: 0 4px 4px 3px; border-radius: 7px 7px 0 0; background: #ece9d8; }
.title.sub { border-radius: 7px 7px 0 0; padding-top: 2px; margin-right: -4px; margin-left: -3px; padding-right: 5px; }
.title.sub h2 { margin-left: 0; font-family: "DejaVu Sans", sans-serif; font-size: 10px; }
.work { flex: 1; min-height: 0; display: grid; grid-template-rows: 1fr 58px 88px; gap: 4px; padding-top: 1px; }
.top { display: flex; gap: 5px; min-height: 0; }
.left { flex: none; width: 161px; display: flex; flex-direction: column; }
.right { flex: 1; min-width: 0; display: flex; flex-direction: column; }

.treebox { flex: 1; min-height: 0; display: grid; grid-template: minmax(0, 1fr) 13px / minmax(0, 1fr) 14px; border: solid #404040; border-width: 2px 0 0 2px; background: #fff; overflow: hidden; }
.tree { display: grid; grid-auto-rows: 1fr; height: 336px; margin-top: -1px; overflow: hidden; list-style: none; }
.tree li { display: flex; align-items: center; min-height: 0; line-height: 13px; white-space: nowrap; font-feature-settings: "palt"; }
.tree li > svg { width: 13px; height: 11px; margin-right: 3px; }
.tree b { display: flex; align-items: center; width: 14px; height: 13px; background: repeating-linear-gradient(90deg, #aaa 0 1px, transparent 1px 2px) 3px 6px / 11px 1px no-repeat; }
.tree b svg { width: 7px; height: 7px; }
.tree .l0 { padding-left: 0; }
.tree .l1 { padding-left: 3px; }
.tree .l2 { padding-left: 19px; }
.tree .l3 { padding-left: 35px; }
.tree .l4 { padding-left: 51px; }
.tree .l1, .tree .l2, .tree .l3, .tree .l4 { background: repeating-linear-gradient(#aaa 0 1px, transparent 1px 2px) 6px 0 / 1px 100% no-repeat; }
.tree .l3, .tree .l4 { background: repeating-linear-gradient(#aaa 0 1px, transparent 1px 2px) 6px 0 / 1px 100% no-repeat, repeating-linear-gradient(#aaa 0 1px, transparent 1px 2px) 22px 0 / 1px 100% no-repeat; }
.tree .l4 b { border-left: 1px dotted #aaa; }
.tree .on { background: #ece9d8; }

/* スクロールバー */
.vs, .hs { display: flex; background: #f4f4fa; }
.vs { flex-direction: column; justify-content: space-between; }
.hs { justify-content: flex-start; }
.vs button, .hs button { display: flex; align-items: center; justify-content: center; flex: none; width: 14px; height: 13px; border: 1px solid #b8ccf8; border-radius: 2px; background: #c4d4fc; color: #30508c; }
.vs svg, .hs svg { width: 9px; height: 9px; }
.dn svg { transform: rotate(180deg); }
.lf svg { transform: rotate(-90deg); }
.rt svg { transform: rotate(90deg); }
.thumb { display: block; border: 1px solid #a8c0f0; border-radius: 2px; background: #c4d4fc; }
.vs .thumb { width: 14px; }
.vs .long { height: 276px; margin-bottom: auto; }
.vs .tiny { height: 6px; margin-bottom: auto; }
.vs .mid { margin: auto 0; }
.hs .thumb { width: 86px; height: 13px; margin-right: auto; }
.treebox .hs .rt { margin-right: 1px; }
.hs.none { background: #fdfdfd; border-top: 1px solid #ece9d8; }
.hs.none i { flex: 1; }
.hs.none button { border-color: #ddd; background: #f4f2ea; color: #c8c8c0; }

/* タブ */
.tabs { display: flex; align-items: flex-start; flex: none; height: 21px; border-top: 3px solid #ece9d8; }
.tree-tabs { height: 27px; padding-top: 4px; border-top-width: 3px; }
.tab { height: 16px; padding: 0 4px; border: 1px solid; border-color: #aca899 #716f64 #716f64 #fff; border-radius: 0 0 2px 2px; line-height: 14px; white-space: nowrap; font-feature-settings: "palt"; }
.tree-tabs .tab { min-width: 36px; }
.right .tab { padding: 0 4px; }
.tab.cur { height: 18px; padding: 1px 8px; border-top-color: transparent; }
.right .tab.cur { padding: 1px 6px; }
.tab.dot { outline: 1px dotted #000; outline-offset: -3px; }

.canvas { flex: 1; min-height: 0; border: solid #202020; border-width: 2px 0 0 2px; background: #fff; overflow: hidden; }
.canvas svg { width: 100%; height: 100%; }
.lbl { font: 7px "Liberation Sans", sans-serif; }
.axis { font-size: 10px; font-feature-settings: "hwid"; }

/* 入力表 */
.gridbox { display: flex; justify-content: space-between; border: solid #404040; border-width: 2px 0 0 2px; border-right: 2px solid #ece9d8; border-bottom: 1px solid #ece9d8; background: #808080; overflow: hidden; }
.grid { flex: none; width: 566px; height: 63px; table-layout: fixed; border-collapse: collapse; line-height: 11px; font-feature-settings: "hwid"; }
.grid th, .grid td { height: 12px; padding: 0 2px; overflow: hidden; white-space: nowrap; }
.grid th { padding: 0; font-weight: 400; border: 1px solid #aca899; background: #ece9d8; }
.grid td { border: 1px solid #e4e0d4; background: #fff; text-align: right; }
.grid td.y { background: #ffff99; }
.grid td.sel { background: #2a60c0; color: #fff; }
.grid td.l { text-align: left; padding: 0 1px; }
.grid td.c { text-align: center; }
.grid .bar-r { border-right: 1px solid #000; }
.c30 { width: 30px; }
.c35 { width: 35px; }
.c36 { width: 36px; }
.c40 { width: 40px; }
.c47 { width: 47px; }
.c50 { width: 50px; }
.c52 { width: 52px; }
.c61 { width: 61px; }
.c70 { width: 70px; }
.c71 { width: 71px; }
.c76 { width: 76px; }

/* 計算ログ */
.logbox { display: grid; grid-template: minmax(0, 1fr) 14px / minmax(0, 1fr) 14px; border: solid #202020; border-width: 2px 0 0 2px; }
.log { background: #fff; overflow: hidden; }
.star { height: 15px; padding: 2px 0 0 1px; font: 14px/15px "Liberation Sans", sans-serif; white-space: nowrap; }
.msg { display: flex; height: 15px; padding-left: 20px; font-size: 13px; line-height: 15px; white-space: pre; }
.msg .hw { font-feature-settings: "hwid"; }
.msg span:nth-child(2) { margin-left: 18px; }
.msg span:nth-child(3) { margin-left: 10px; }
.msg span:nth-child(4), .msg span:nth-child(6) { margin-left: 7px; }
.msg span:nth-child(5) { margin-left: 30px; }

/* ステータスバー */
.status { display: flex; align-items: center; gap: 3px; flex: none; height: 18px; border-top: 1px solid #fff; }
.status .msg0 { flex: 1; padding-left: 1px; }
.p { height: 14px; padding-left: 1px; border: 1px solid; border-color: #aca899 #fff #fff #aca899; }
.p70 { width: 71px; }
.p88 { width: 88px; }
.p172 { width: 173px; }
.size { width: 12px; height: 12px; }
```
